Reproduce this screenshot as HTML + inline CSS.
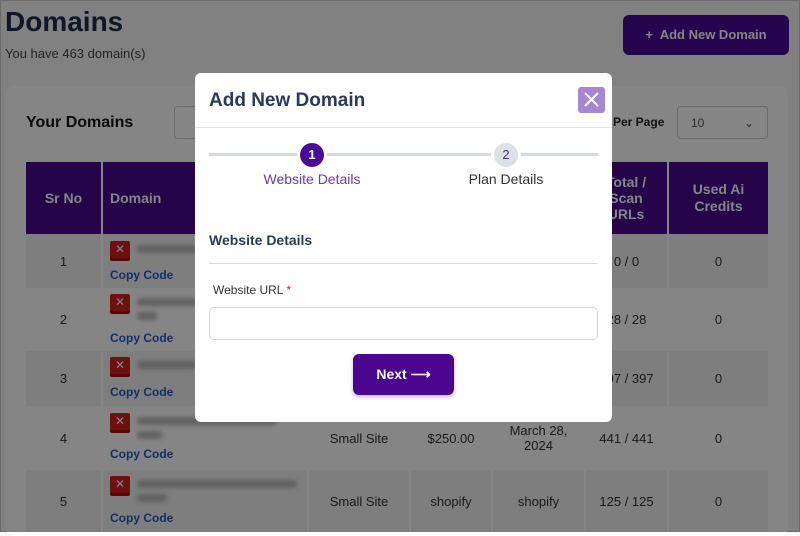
<!DOCTYPE html>
<html><head><style>
*{box-sizing:border-box;margin:0;padding:0}
body{width:800px;height:532px;overflow:hidden;font-family:"Liberation Sans",sans-serif;background:#f8f8f8;position:relative}
.a{position:absolute}
.t{color:#1e2b4a}
.cell{position:absolute;display:flex;align-items:center;justify-content:center;text-align:center;font-size:13px;color:#333}
.hd{background:#48088f;color:#fff;font-weight:bold;font-size:14px}
.ov{position:absolute;left:0;top:0;width:800px;height:532px;background:rgba(0,0,0,0.48)}
.x{position:absolute;width:20px;height:20px;background:#d32020;border-radius:2px;color:#fff;font-size:12px;text-align:center;line-height:16px;border-bottom:3px solid #a50e0e}
.cc{position:absolute;color:#1f5fc8;font-weight:bold;font-size:12px}
.blur{position:absolute;height:8px;background:#bbb;border-radius:3px;filter:blur(2px)}
</style></head><body>
<div class="a" style="left:0;top:0;width:800px;height:532px;border:1px solid #ccc"></div>
<div class="a t" style="left:5px;top:6px;font-size:28px;font-weight:bold">Domains</div>
<div class="a" style="left:5px;top:46px;font-size:13px;color:#444">You have 463 domain(s)</div>
<div class="a" style="left:623px;top:15px;width:166px;height:40px;background:#4b0a96;border-radius:6px;color:#fff;font-weight:bold;font-size:13px;line-height:40px;text-align:center">+&nbsp; Add New Domain</div>
<div class="a" style="left:6px;top:86px;width:782px;height:450px;background:#fff;border-radius:8px"></div>
<div class="a" style="left:26px;top:114px;font-size:16px;font-weight:bold;color:#111">Your Domains</div>
<div class="a" style="left:174px;top:106px;width:60px;height:33px;border:1px solid #ccc;border-radius:4px"></div>
<div class="a" style="left:613px;top:115px;font-size:12px;font-weight:bold;color:#222">Per Page</div>
<div class="a" style="left:677px;top:106px;width:91px;height:33px;border:1px solid #ccc;border-radius:4px;font-size:12px;color:#555;padding:9px 13px">10<span style="float:right">&#8964;</span></div>
<div class="cell hd" style="left:26px;top:162px;width:75px;height:72px">Sr No</div>
<div class="cell hd" style="left:103px;top:162px;width:204px;height:72px;justify-content:flex-start;padding-left:7px">Domain</div>
<div class="cell hd" style="left:309px;top:162px;width:358px;height:72px"></div>
<div class="cell hd" style="left:585px;top:162px;width:82px;height:72px;line-height:16px">Total /<br>Scan<br>URLs</div>
<div class="cell hd" style="left:669px;top:162px;width:99px;height:72px;line-height:17px">Used Ai<br>Credits</div>
<div class="a" style="left:26px;top:234px;width:742px;height:54px;background:#f2f2f2"></div>
<div class="a" style="left:26px;top:351px;width:742px;height:55px;background:#f2f2f2"></div>
<div class="a" style="left:26px;top:470px;width:742px;height:62px;background:#f2f2f2"></div>
<div class="a" style="left:101px;top:234px;width:2px;height:298px;background:#fff"></div>
<div class="a" style="left:307px;top:234px;width:2px;height:298px;background:#fff"></div>
<div class="a" style="left:409px;top:234px;width:2px;height:298px;background:#fff"></div>
<div class="a" style="left:491px;top:234px;width:2px;height:298px;background:#fff"></div>
<div class="a" style="left:584px;top:234px;width:2px;height:298px;background:#fff"></div>
<div class="a" style="left:667px;top:234px;width:2px;height:298px;background:#fff"></div>
<div class="cell" style="left:26px;top:234px;width:75px;height:54px">1</div>
<div class="cell" style="left:26px;top:288px;width:75px;height:63px">2</div>
<div class="cell" style="left:26px;top:351px;width:75px;height:55px">3</div>
<div class="cell" style="left:26px;top:406px;width:75px;height:64px">4</div>
<div class="cell" style="left:26px;top:470px;width:75px;height:62px">5</div>
<div class="x" style="left:110px;top:241px">✕</div><div class="blur" style="left:137px;top:245px;width:60px"></div><div class="cc" style="left:110px;top:268px">Copy Code</div>
<div class="x" style="left:110px;top:294px">✕</div><div class="blur" style="left:137px;top:298px;width:60px"></div><div class="blur" style="left:137px;top:312px;width:20px"></div><div class="cc" style="left:110px;top:331px">Copy Code</div>
<div class="x" style="left:110px;top:357px">✕</div><div class="blur" style="left:137px;top:361px;width:60px"></div><div class="cc" style="left:110px;top:385px">Copy Code</div>
<div class="x" style="left:110px;top:413px">✕</div><div class="blur" style="left:137px;top:417px;width:140px"></div><div class="blur" style="left:137px;top:431px;width:25px"></div><div class="cc" style="left:110px;top:447px">Copy Code</div>
<div class="x" style="left:110px;top:476px">✕</div><div class="blur" style="left:137px;top:480px;width:160px"></div><div class="blur" style="left:137px;top:494px;width:30px"></div><div class="cc" style="left:110px;top:511px">Copy Code</div>
<div class="cell" style="left:309px;top:406px;width:100px;height:64px">Small Site</div>
<div class="cell" style="left:411px;top:406px;width:80px;height:64px">$250.00</div>
<div class="cell" style="left:493px;top:406px;width:91px;height:64px;line-height:15px">March 28,<br>2024</div>
<div class="cell" style="left:586px;top:406px;width:81px;height:64px">441 / 441</div>
<div class="cell" style="left:309px;top:470px;width:100px;height:62px">Small Site</div>
<div class="cell" style="left:411px;top:470px;width:80px;height:62px">shopify</div>
<div class="cell" style="left:493px;top:470px;width:91px;height:62px">shopify</div>
<div class="cell" style="left:586px;top:470px;width:81px;height:62px">125 / 125</div>
<div class="cell" style="left:586px;top:234px;width:81px;height:54px">0 / 0</div>
<div class="cell" style="left:586px;top:288px;width:81px;height:63px">28 / 28</div>
<div class="cell" style="left:586px;top:351px;width:81px;height:55px">397 / 397</div>
<div class="cell" style="left:669px;top:234px;width:99px;height:54px">0</div>
<div class="cell" style="left:669px;top:288px;width:99px;height:63px">0</div>
<div class="cell" style="left:669px;top:351px;width:99px;height:55px">0</div>
<div class="cell" style="left:669px;top:406px;width:99px;height:64px">0</div>
<div class="cell" style="left:669px;top:470px;width:99px;height:62px">0</div>
<div class="ov"></div>
<div class="a" style="left:195px;top:73px;width:417px;height:349px;background:#fff;border-radius:6px">
  <div class="a" style="left:14px;top:17px;font-size:19px;font-weight:bold;color:#2b3a5c">Add New Domain</div>
  <div class="a" style="left:383px;top:14px;width:27px;height:26px;background:#a686d2;border-radius:3px">
    <svg width="27" height="26"><path d="M7 6 L20 19 M20 6 L7 19" stroke="#fff" stroke-width="2"/></svg>
  </div>
  <div class="a" style="left:0;top:54px;width:417px;height:1px;background:#e3e3e3"></div>
  <div class="a" style="left:14px;top:80px;width:389px;height:3px;background:#d5d8de"></div>
  <div class="a" style="left:105px;top:70px;width:24px;height:24px;border-radius:50%;background:#4b0a96;color:#fff;font-size:13px;font-weight:bold;text-align:center;line-height:24px;box-shadow:0 0 0 3px #fff">1</div>
  <div class="a" style="left:299px;top:70px;width:24px;height:24px;border-radius:50%;background:#dde0e7;color:#4b2a8a;font-size:13px;text-align:center;line-height:24px;box-shadow:0 0 0 3px #fff">2</div>
  <div class="a" style="left:60px;top:98px;width:114px;text-align:center;font-size:14px;color:#6a3aa8">Website Details</div>
  <div class="a" style="left:256px;top:98px;width:110px;text-align:center;font-size:14px;color:#333">Plan Details</div>
  <div class="a" style="left:14px;top:159px;font-size:14px;font-weight:bold;color:#2b3a5c">Website Details</div>
  <div class="a" style="left:14px;top:190px;width:389px;height:1px;background:#dcdcdc"></div>
  <div class="a" style="left:18px;top:210px;font-size:12px;color:#333">Website URL <span style="color:#d22">*</span></div>
  <div class="a" style="left:14px;top:234px;width:389px;height:33px;border:1px solid #d8d8d8;border-radius:5px"></div>
  <div class="a" style="left:158px;top:281px;width:101px;height:41px;background:#4b0590;border-radius:6px;color:#fff;font-weight:bold;font-size:14px;text-align:center;line-height:41px;box-shadow:0 2px 4px rgba(120,60,200,0.4)">Next &#10230;</div>
</div>
</body></html>
